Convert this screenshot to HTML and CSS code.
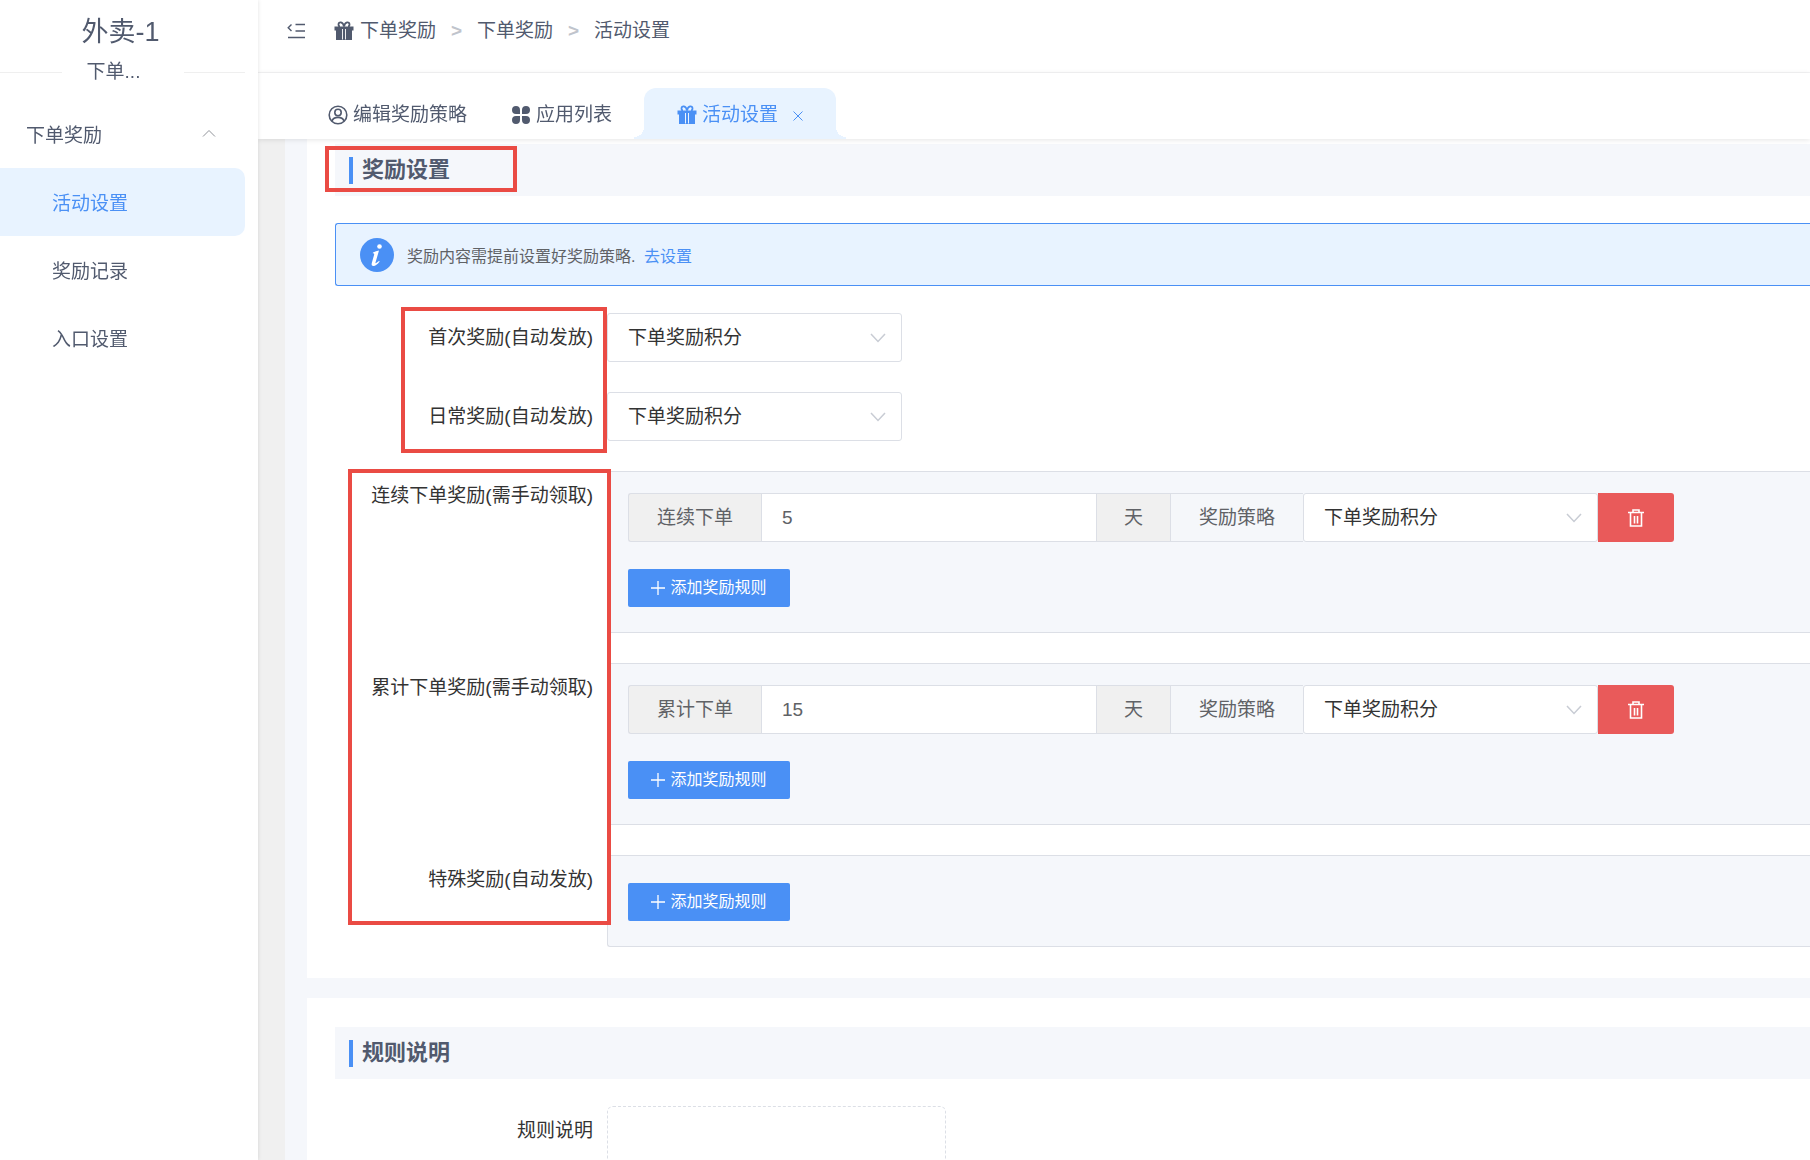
FILE: index.html
```html
<!DOCTYPE html>
<html lang="zh-CN">
<head>
<meta charset="utf-8">
<meta name="viewport" content="width=device-width, initial-scale=1">
<title>活动设置</title>
<link rel="stylesheet" href="styles.css">
</head>
<body>
<svg class="sprite" aria-hidden="true">
  <symbol id="gift" viewBox="0 0 20 20">
    <path d="M.5 5.500h19v4H.5z M2 9h6.800v10H2z M11.200 9H18v10h-6.800z M8.800 9h2.400v10H8.800z" fill="currentColor"/>
    <path d="M8.500 8V18.500M11.500 8V18.500" stroke="#fff" stroke-width=".9" fill="none"/>
    <path d="M10 5.500C9 .5 4.500 .300 4.500 3.500 4.500 4.700 5 5.500 6 5.500M10 5.500C11 .5 15.500 .300 15.500 3.500 15.500 4.700 15 5.500 14 5.500" stroke="currentColor" stroke-width="1.800" fill="none"/>
  </symbol>
  <symbol id="down" viewBox="0 0 16 10">
    <path d="M1 1l7 7.500L15 1" stroke="currentColor" stroke-width="1.500" fill="none"/>
  </symbol>
  <symbol id="trash" viewBox="0 0 16 18">
    <path d="M0 3.500h16M5 3.500V1h6v2.500M2.500 4v13h11V4M6.500 7v7.500M9.500 7v7.500" stroke="currentColor" stroke-width="1.600" fill="none"/>
  </symbol>
  <symbol id="plus" viewBox="0 0 14 14">
    <path d="M7 0v14M0 7h14" stroke="currentColor" stroke-width="1.300" fill="none"/>
  </symbol>
</svg>
<div class="app">
  <aside class="sidebar">
    <h1 class="brand">外卖-1</h1>
    <div class="divider"><span>下单...</span></div>
    <nav>
      <button class="menu-head" type="button">下单奖励
        <svg class="menu-arrow" viewBox="0 0 14 8"><path d="M1 7.500l6-6 6 6" stroke="currentColor" fill="none"/></svg>
      </button>
      <a class="menu-item active" href="#">活动设置</a>
      <a class="menu-item" href="#">奖励记录</a>
      <a class="menu-item" href="#">入口设置</a>
    </nav>
  </aside>
  <div class="main">
    <header class="topbar">
      <button class="collapse" type="button" aria-label="收起菜单">
        <svg viewBox="0 0 18 16"><path d="M8.500 1.500H18M8.500 8H18M1 14.500h17" stroke="currentColor" stroke-width="1.600" fill="none"/><path d="M4.500 1.500L1.200 4.800l3.300 3.300" stroke="currentColor" stroke-width="1.400" fill="none"/></svg>
      </button>
      <nav class="crumbs">
        <a href="#"><svg class="icon"><use href="#gift"/></svg>下单奖励</a>
        <span class="sep">&gt;</span>
        <a href="#">下单奖励</a>
        <span class="sep">&gt;</span>
        <a href="#">活动设置</a>
      </nav>
    </header>
    <nav class="tabs">
      <a class="tab" href="#"><svg class="icon" viewBox="0 0 20 20"><g fill="none" stroke="currentColor" stroke-width="1.600"><circle cx="10" cy="10" r="8.800"/><circle cx="10" cy="7.500" r="3.200"/><path d="M4 16c1-2.800 3.200-3.600 6-3.600s5 .8 6 3.600"/></g></svg>编辑奖励策略</a>
      <a class="tab" href="#"><svg class="icon" viewBox="0 0 20 20"><path d="M5 1a4 4 0 0 1 4 4v4H5a4 4 0 0 1 0-8zM15 1a4 4 0 0 0-4 4v4h4a4 4 0 0 0 0-8zM5 19a4 4 0 0 0 4-4v-4H5a4 4 0 0 0 0 8zM15 19a4 4 0 0 1-4-4v-4h4a4 4 0 0 1 0 8z" fill="currentColor"/></svg>应用列表</a>
      <a class="tab current" href="#"><svg class="icon"><use href="#gift"/></svg>活动设置<svg class="close" viewBox="0 0 10 10"><path d="M.5.500l9 9M9.500.500l-9 9" stroke="currentColor" fill="none"/></svg></a>
    </nav>
    <div class="scroll">
      <main class="content">
        <section class="card first">
          <h2 class="title">奖励设置<i class="mark mark-title"></i></h2>
          <div class="alert">
            <svg class="info" viewBox="0 0 34 34"><circle cx="17" cy="17" r="17" fill="currentColor"/><circle cx="19.500" cy="8.500" r="2.300" fill="#fff"/><path d="M13 14.500q3-1.500 6-2l-3.500 12q-.4 1.800 3.500-1.500l.7.600q-3.400 4.400-6.200 4.400-2.500 0-1.700-3l2.400-8.500q.3-1.300-1.500-1.200z" fill="#fff"/></svg>
            <p>奖励内容需提前设置好奖励策略. <a href="#">去设置</a></p>
          </div>
          <div class="group">
            <div class="row">
              <label class="label" for="first">首次奖励(自动发放)</label>
              <span class="select"><select id="first"><option>下单奖励积分</option></select><svg><use href="#down"/></svg></span>
            </div>
            <div class="row">
              <label class="label" for="daily">日常奖励(自动发放)</label>
              <span class="select"><select id="daily"><option>下单奖励积分</option></select><svg><use href="#down"/></svg></span>
            </div>
            <i class="mark mark-auto"></i>
          </div>
          <div class="group">
            <div class="row">
              <span class="label">连续下单奖励(需手动领取)</span>
              <div class="rules">
                <div class="rule">
                  <label class="addon name" for="streak">连续下单</label>
                  <input class="days" id="streak" type="text" value="5">
                  <span class="addon unit">天</span>
                  <label class="addon policy" for="streak-policy">奖励策略</label>
                  <span class="select"><select id="streak-policy"><option>下单奖励积分</option></select><svg><use href="#down"/></svg></span>
                  <button class="delete" type="button" aria-label="删除"><svg><use href="#trash"/></svg></button>
                </div>
                <button class="add" type="button"><svg><use href="#plus"/></svg>添加奖励规则</button>
              </div>
            </div>
            <div class="row">
              <span class="label">累计下单奖励(需手动领取)</span>
              <div class="rules">
                <div class="rule">
                  <label class="addon name" for="total">累计下单</label>
                  <input class="days" id="total" type="text" value="15">
                  <span class="addon unit">天</span>
                  <label class="addon policy" for="total-policy">奖励策略</label>
                  <span class="select"><select id="total-policy"><option>下单奖励积分</option></select><svg><use href="#down"/></svg></span>
                  <button class="delete" type="button" aria-label="删除"><svg><use href="#trash"/></svg></button>
                </div>
                <button class="add" type="button"><svg><use href="#plus"/></svg>添加奖励规则</button>
              </div>
            </div>
            <div class="row">
              <span class="label">特殊奖励(自动发放)</span>
              <div class="rules">
                <button class="add" type="button"><svg><use href="#plus"/></svg>添加奖励规则</button>
              </div>
            </div>
            <i class="mark mark-manual"></i>
          </div>
        </section>
        <section class="card">
          <h2 class="title">规则说明</h2>
          <div class="row">
            <label class="label" for="desc">规则说明</label>
            <textarea class="desc" id="desc"></textarea>
          </div>
        </section>
      </main>
    </div>
  </div>
</div>
</body>
</html>
```

FILE: styles.css
```css
* { box-sizing: border-box; }

body {
  margin: 0;
  font: 19px/28px "Liberation Sans", "Noto Sans CJK SC", sans-serif;
  color: #515a6e;
  background: #fff;
}

a { color: inherit; text-decoration: none; }
h1, h2, p { margin: 0; font-weight: 400; }
button, input, select, textarea { font: inherit; color: inherit; margin: 0; }
button { border: 0; padding: 0; background: none; cursor: pointer; }
svg { display: block; flex: none; }
.sprite { display: none; }
.icon { width: 20px; height: 20px; }

.app { display: flex; height: 100vh; }

/* sidebar */
.sidebar {
  flex: none;
  width: 258px;
  padding: 12px 13px 0 0;
  background: #fff;
  box-shadow: 0 0 4px rgba(0, 0, 0, .12);
  z-index: 2;
}
.brand { padding-right: 4px; font-size: 27px; line-height: 40px; text-align: center; }
.divider { display: flex; align-items: center; margin-top: 6px; }
.divider::before, .divider::after { content: ""; flex: 1; height: 1px; background: #efefef; }
.divider span { width: 122px; padding-right: 18px; text-align: center; }
.menu-head {
  display: flex;
  align-items: center;
  justify-content: space-between;
  width: 100%;
  height: 68px;
  margin-top: 14px;
  padding: 4px 29px 0 26px;
}
.menu-arrow { width: 14px; height: 8px; margin-bottom: 6px; color: #909399; }
.menu-item { display: block; padding: 4px 52px 0; line-height: 64px; border-radius: 0 10px 10px 0; }
.menu-item.active { color: #4a90f5; background: #e8f3ff; }

/* header */
.main { flex: 1; min-width: 0; display: flex; flex-direction: column; }
.topbar {
  display: flex;
  align-items: center;
  gap: 29px;
  height: 73px;
  padding: 0 29px 10px;
  border-bottom: 1px solid #f4f4f5;
}
.collapse svg { width: 18px; height: 16px; }
.crumbs { display: flex; align-items: center; }
.crumbs a { display: flex; align-items: center; gap: 6px; }
.sep { width: 41px; text-align: center; font-weight: 700; color: #c0c4cc; }

.tabs {
  display: flex;
  align-items: flex-end;
  height: 66px;
  padding-left: 70px;
  box-shadow: 0 1px 5px rgba(0, 0, 0, .1);
  z-index: 1;
}
.tab { display: flex; align-items: center; gap: 5px; height: 51px; margin-right: 44px; padding-top: 2px; }
.tab.current {
  position: relative;
  margin-left: -12px;
  padding: 2px 33px 0;
  color: #4a90f5;
  background: #e8f3ff;
  border-radius: 12px 12px 0 0;
}
.tab.current::before, .tab.current::after {
  content: "";
  position: absolute;
  bottom: 0;
  width: 10px;
  height: 12px;
}
.tab.current::before { right: 100%; background: radial-gradient(circle at 0 0, transparent 10px, #e8f3ff 10px); }
.tab.current::after { left: 100%; background: radial-gradient(circle at 100% 0, transparent 10px, #e8f3ff 10px); }
.close { width: 10px; height: 10px; margin: 3px 0 0 10px; }

/* content */
.scroll {
  flex: 1;
  min-height: 0;
  overflow: hidden auto;
  scrollbar-width: none;
  padding-left: 27px;
  background: #f0f0f0;
}
.content { display: grid; gap: 20px; padding-left: 22px; background: #f5f7fb; }
.card { padding: 29px 0 31px 28px; background: #fff; }
.card.first { padding-top: 5px; }
.title {
  position: relative;
  display: flex;
  align-items: center;
  gap: 9px;
  height: 52px;
  margin-bottom: 27px;
  padding-left: 14px;
  font-size: 22px;
  font-weight: 600;
  background: #f5f7fb;
}
.title::before { content: ""; width: 4px; height: 27px; background: #4a90f5; }

.alert {
  display: flex;
  align-items: center;
  gap: 13px;
  height: 63px;
  margin-bottom: 27px;
  padding-left: 24px;
  font-size: 16px;
  color: #606266;
  background: #e8f3ff;
  border: 1px solid #4a90f5;
  border-right: 0;
  border-radius: 3px 0 0 3px;
}
.alert p { padding-top: 4px; }
.alert a { margin-left: 4px; color: #4a90f5; }
.info { width: 34px; height: 34px; color: #4a90f5; }

.group { position: relative; }
.group + .group { margin-top: 30px; }
.row { display: flex; align-items: flex-start; }
.row + .row { margin-top: 30px; }
.label { flex: none; width: 272px; padding-right: 14px; line-height: 49px; text-align: right; color: #333; }

.select { position: relative; width: 295px; height: 49px; color: #333; }
.select select {
  appearance: none;
  width: 100%;
  height: 100%;
  padding: 0 40px 0 20px;
  background: #fff;
  border: 1px solid #dcdfe6;
  border-radius: 3px;
}
.select svg {
  position: absolute;
  right: 16px;
  top: 20px;
  width: 16px;
  height: 10px;
  color: #c8ccd4;
  pointer-events: none;
}

.rules {
  flex: 1;
  min-width: 0;
  padding: 21px 0 25px 20px;
  background: #f5f7fb;
  border: 1px solid #dcdfe6;
  border-right: 0;
  border-radius: 3px 0 0 3px;
}
.rule { display: flex; height: 49px; color: #606266; }
.addon {
  display: flex;
  align-items: center;
  justify-content: center;
  background: #f0f0f0;
  border: 1px solid #dcdfe6;
}
.name { width: 133px; border-right: 0; border-radius: 3px 0 0 3px; }
.days { width: 335px; padding: 0 20px; background: #fff; border: 1px solid #dcdfe6; border-right: 0; }
.unit { width: 75px; }
.policy { width: 132px; background: #f5f7fa; border-left: 0; border-right: 0; }
.delete {
  display: grid;
  place-items: center;
  width: 76px;
  color: #fff;
  background: #e95a5a;
  border-radius: 0 3px 3px 0;
}
.delete svg { width: 16px; height: 18px; }
.add {
  display: flex;
  align-items: center;
  justify-content: center;
  gap: 5px;
  width: 162px;
  height: 38px;
  margin-top: 6px;
  font-size: 16px;
  color: #fff;
  background: #4a90f5;
  border-radius: 2px;
}
.rule + .add { margin-top: 27px; }
.add svg { width: 14px; height: 14px; }

.desc {
  width: 339px;
  height: 339px;
  resize: none;
  background: #fff;
  border: 1px dashed #dcdfe6;
  border-radius: 6px;
}

/* red callout frames */
.mark { position: absolute; border: 4px solid #ea4b44; pointer-events: none; }
.mark-title { left: -10px; top: 2px; width: 192px; height: 46px; }
.mark-auto { left: 66px; top: -6px; width: 206px; height: 146px; }
.mark-manual { left: 13px; top: -2px; width: 263px; height: 456px; }
```
